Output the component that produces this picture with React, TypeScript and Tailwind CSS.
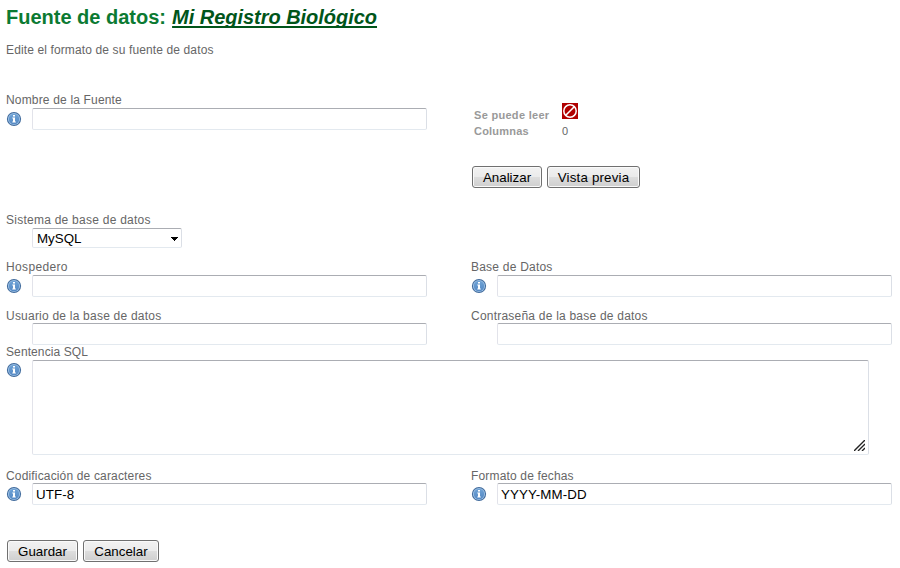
import React from "react";

function InfoIcon() {
  return (
    <svg width="16" height="16" viewBox="0 0 16 16" className="block">
      <defs>
        <linearGradient id="infoBlue" x1="0" y1="0" x2="0" y2="1">
          <stop offset="0" stopColor="#6fa3d6" />
          <stop offset="1" stopColor="#5589c4" />
        </linearGradient>
      </defs>
      <circle cx="8" cy="8" r="7.1" fill="#3f6a9c" />
      <circle cx="8" cy="8" r="6.1" fill="#9dc0e4" />
      <circle cx="8" cy="8" r="5.2" fill="url(#infoBlue)" />
      <path d="M7 4h2v1.5H7zM6.3 6.5H9v4h.8v1H6.3v-1H7v-3h-.7z" fill="#fff" />
    </svg>
  );
}

function NotReadableIcon() {
  return (
    <svg width="16" height="16" viewBox="0 0 16 16" className="block">
      <rect width="16" height="16" fill="#b00000" />
      <circle cx="8" cy="8" r="6.2" fill="none" stroke="#fff" strokeWidth="1.5" />
      <path d="M4 12 12 4" stroke="#fff" strokeWidth="1.6" />
    </svg>
  );
}

const box =
  "rounded-[2px] border border-t-[#abadb3] border-r-[#dbdfe6] border-b-[#e3e9ef] border-l-[#e2e3ea] bg-white text-black";

type FieldProps = {
  label: string;
  info?: boolean;
  labelClass?: string;
  iconClass?: string;
  children: React.ReactNode;
};

function Field({ label, info, labelClass = "tracking-[0.17px]", iconClass = "pt-[3px]", children }: FieldProps) {
  return (
    <div className="flex flex-col">
      <label className={`${labelClass} h-4 whitespace-nowrap text-[12px] leading-4`}>{label}</label>
      <div className="flex">
        <div className={`${iconClass} w-[26px] shrink-0`}>{info && <InfoIcon />}</div>
        {children}
      </div>
    </div>
  );
}

function TextInput({ value = "" }: { value?: string }) {
  return <input defaultValue={value} className={`${box} h-[22px] w-[395px] px-[3px] text-[13.33px] tracking-[0.1px]`} />;
}

function Button({ children, size }: { children: string; size: string }) {
  return (
    <button
      className={`${size} flex h-[22px] justify-center whitespace-nowrap rounded-[3px] border border-[#707070] bg-[linear-gradient(#f2f2f2_0%,#ebebeb_48%,#dddddd_52%,#cfcfcf_100%)] pt-px text-[13.33px] leading-5 text-black shadow-[inset_0_0_0_1px_#fafafa]`}
    >
      {children}
    </button>
  );
}

export default function App() {
  return (
    <main className="flex h-[568px] w-[900px] flex-col overflow-hidden bg-white pl-[6px] font-['Liberation_Sans',Arial,sans-serif] text-[#666]">
      <h1 className="mt-[5px] h-6 whitespace-nowrap text-[20px] font-bold leading-6 text-[#0b7a32]">
        Fuente de datos:{" "}
        <em className="ml-[0.5px] tracking-[-0.03px] text-[#00551a] underline decoration-2 underline-offset-2 [text-decoration-skip-ink:none]">Mi Registro Biológico</em>
      </h1>
      <p className="mt-[13px] h-4 text-[12px] leading-4 tracking-[0.125px]">Edite el formato de su fuente de datos</p>

      <form className="mt-[34px] flex flex-col" onSubmit={(e) => e.preventDefault()}>
        <div className="flex h-[120px] gap-11">
          <Field label="Nombre de la Fuente" info>
            <TextInput />
          </Field>
          <div className="pt-[11px] pl-[1px]">
            <dl className="grid grid-cols-[88px_auto] pl-[2px] text-[11px]">
              <dt className="h-5 whitespace-nowrap pt-1 font-bold leading-4 tracking-[0.3px] text-[#999]">Se puede leer</dt>
              <dd className="h-5"><NotReadableIcon /></dd>
              <dt className="h-4 font-bold leading-4 tracking-[0.2px] text-[#999]">Columnas</dt>
              <dd className="h-4 leading-4">0</dd>
            </dl>
            <div className="mt-[27px] flex gap-[5px]">
              <Button size="w-[70px]">Analizar</Button>
              <Button size="w-[93px] tracking-[0.17px]">Vista previa</Button>
            </div>
          </div>
        </div>

        <div className="h-[47px]">
          <Field label="Sistema de base de datos" labelClass="tracking-[0.25px]">
            <div className={`${box} flex h-5 w-[150px] items-center justify-between pr-[3px] pl-1 text-[13.33px] leading-[18px]`}>
              <span className="pt-px">MySQL</span>
              <svg width="7" height="4" viewBox="0 0 7 4" className="mt-[2px]" shapeRendering="crispEdges">
                <path d="M0 0h7v1H6v1H5v1H4v1H3V3H2V2H1V1H0z" fill="#000" />
              </svg>
            </div>
          </Field>
        </div>

        <div className="flex h-12 gap-11">
          <Field label="Hospedero" labelClass="tracking-[0.35px]" info><TextInput /></Field>
          <Field label="Base de Datos" labelClass="tracking-[0.22px]" info><TextInput /></Field>
        </div>
        <div className="flex h-[37px] gap-11">
          <Field label="Usuario de la base de datos" labelClass="pt-px tracking-[0.22px]"><TextInput /></Field>
          <Field label="Contraseña de la base de datos" labelClass="pt-px tracking-[0.22px]"><TextInput /></Field>
        </div>
        <div className="h-[123px]">
          <Field label="Sentencia SQL" labelClass="tracking-[0.1px]" iconClass="pt-[2px]" info>
            <div className={`${box} flex h-[95px] w-[837px] items-end justify-end pr-[3px] pb-[3px]`}>
              <svg width="11" height="11" viewBox="0 0 11 11">
                <path d="M0 11 11 0M4 11 11 4M8 11 11 8" stroke="#222" strokeWidth="1.4" />
              </svg>
            </div>
          </Field>
        </div>
        <div className="flex h-[73px] gap-11">
          <Field label="Codificación de caracteres" labelClass="pt-px tracking-[0.16px]" info><TextInput value="UTF-8" /></Field>
          <Field label="Formato de fechas" labelClass="pt-px tracking-[0.16px]" info><TextInput value="YYYY-MM-DD" /></Field>
        </div>
        <div className="flex gap-[5px] pl-px">
          <Button size="w-[71px]">Guardar</Button>
          <Button size="w-[76px]">Cancelar</Button>
        </div>
      </form>
    </main>
  );
}
